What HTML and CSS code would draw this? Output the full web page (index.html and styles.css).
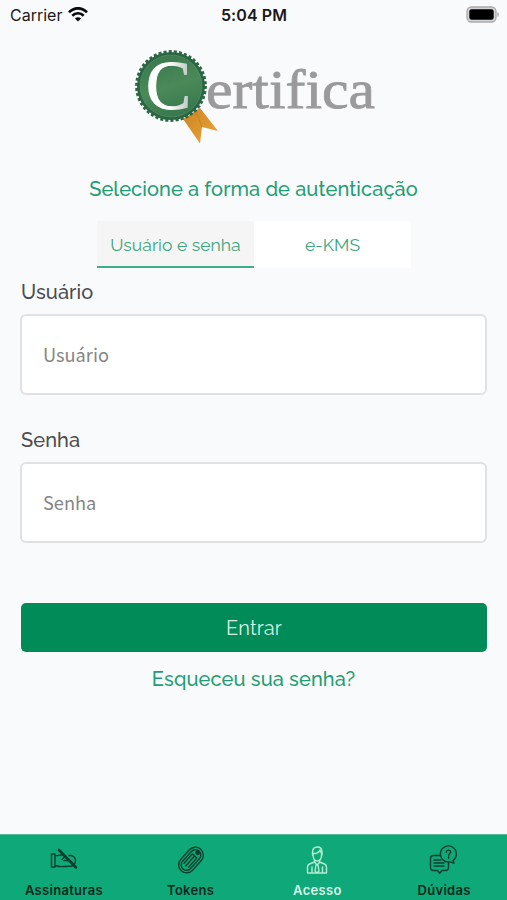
FILE: index.html
```html
<!DOCTYPE html>
<html lang="pt-BR">
<head>
<meta charset="utf-8">
<meta name="viewport" content="width=device-width, initial-scale=1">
<title>Certifica</title>
<link rel="stylesheet" href="styles.css">
</head>
<body>
<div class="screen">
  <header class="status">
    <div class="carrier">
      <span>Carrier</span>
      <svg width="20" height="15" viewBox="0 0 20 15" fill="none" stroke="#0c0c0d" stroke-width="2.7">
        <path d="M1 5.4C6-.1 14-.1 19 5.4"/>
        <path d="M4.3 8.8c3.2-3.4 8.2-3.4 11.4 0"/>
        <path d="M10 14.6 6.9 11.5c1.7-1.7 4.5-1.7 6.2 0z" fill="#0c0c0d" stroke="none"/>
      </svg>
    </div>
    <span class="clock">5:04 PM</span>
    <svg class="battery" width="34" height="17" viewBox="0 0 34 17">
      <rect x="1" y="1" width="29" height="15" rx="4.5" fill="#d4d5d6" stroke="#a9aaac" stroke-width="1.3"/>
      <rect x="3.3" y="3.2" width="24.4" height="10.6" rx="2.4" fill="#000"/>
      <path d="M31.4 6c2 .7 2 4.300 0 5z" fill="#a9aaac"/>
    </svg>
  </header>

  <main class="content">
    <svg class="logo" width="246" height="100" viewBox="0 0 246 100" role="img" aria-label="Certifica">
      <defs>
        <linearGradient id="seal" x1="0" y1="0" x2="0.3" y2="1">
          <stop offset="0" stop-color="#35764b"/>
          <stop offset="0.6" stop-color="#4b8958"/>
          <stop offset="1" stop-color="#397a4e"/>
        </linearGradient>
        <linearGradient id="ribbon" x1="0" y1="0" x2="1" y2="1">
          <stop offset="0" stop-color="#c98422"/>
          <stop offset="1" stop-color="#efa63b"/>
        </linearGradient>
        <linearGradient id="letter" x1="0" y1="0" x2="1" y2="0">
          <stop offset="0.5" stop-color="#fff"/>
          <stop offset="1" stop-color="#b9c3bd"/>
        </linearGradient>
      </defs>
      <path d="M53 75 70 64 88 87 72 83 70 99.500z" fill="url(#ribbon)"/>
      <path d="M66 68 72 83" stroke="#c07c20" stroke-width=".7"/>
      <circle cx="41" cy="42" r="34" fill="#2b6744"/>
      <circle class="teeth" cx="41" cy="42" r="34.200"/>
      <circle cx="41" cy="42" r="31.600" fill="url(#seal)" stroke="#28603f" stroke-width="1"/>
      <circle cx="41" cy="42" r="31" fill="none" stroke="#679873" stroke-width=".5"/>
      <text class="logo-c" x="16" y="65.300" textLength="45" lengthAdjust="spacingAndGlyphs" fill="url(#letter)" stroke="url(#letter)">C</text>
      <text class="logo-name" x="76" y="63.500" textLength="169" lengthAdjust="spacingAndGlyphs">ertifica</text>
    </svg>

    <h1 class="title">Selecione a forma de autenticação</h1>

    <nav class="tabs">
      <a class="tab active">Usuário e senha</a>
      <a class="tab">e-KMS</a>
    </nav>

    <form class="form">
      <label class="label" for="user">Usuário</label>
      <input class="field" id="user" type="text" placeholder="Usuário">
      <label class="label" for="pass">Senha</label>
      <input class="field" id="pass" type="password" placeholder="Senha">
      <button class="submit" type="button">Entrar</button>
    </form>
    <a class="forgot">Esqueceu sua senha?</a>
  </main>

  <footer class="bar">
    <a class="item">
      <svg width="30" height="30" viewBox="0 0 30 30">
        <path d="M2.500 9h3.500v13H2.500zM6 10.500c3 .8 4-1 7-.5l3 1M6 20.500c3 1 5 1.500 9 1l7-.2c2 0 2.500-2 1-2.600M20 10.500c4-.5 6.500 2 6.500 5 0 2.200-1 4-3 4.500M13 14.500l3-3 7 6M15 15.500h4"/>
        <path d="m10 5 17 17.500" stroke-width="2.600"/>
      </svg>
      <span>Assinaturas</span>
    </a>
    <a class="item">
      <svg width="30" height="30" viewBox="0 0 30 30">
        <g transform="rotate(42 15 15)">
          <rect x="7" y="0.500" width="16" height="29" rx="8"/>
          <rect x="9.600" y="3" width="10.800" height="24" rx="5.400"/>
          <path d="M12 10v12M15 10v13M18 10v12M12 9.500h6"/>
          <circle cx="15" cy="5" r="1.800" fill="#073f2d"/>
        </g>
      </svg>
      <span>Tokens</span>
    </a>
    <a class="item selected">
      <svg width="30" height="30" viewBox="0 0 30 30">
        <path d="M10.500 10V7.500C10.500 3.500 12.500 2 15.500 2s4.500 2 4.500 5v3M11 8.500c4 .3 6-1 7-3.500l1.500 3.500M11 9c0 5 2 7 4.300 7s4.300-2 4.300-7"/>
        <path d="M12.500 15v2l-5 2c-1.500.7-2 1.500-2 3v6h19v-6c0-1.500-.5-2.300-2-3l-5-2v-2M12.500 17l2.700 3 2.700-3M10 22v6M20.500 22v6M14 20l-1 6 2 2 2-2-1-6"/>
      </svg>
      <span>Acesso</span>
    </a>
    <a class="item">
      <svg width="30" height="30" viewBox="0 0 30 30">
        <path d="M11 10.500H4.500a3 3 0 0 0-3 3v9a3 3 0 0 0 3 3h4l2.200 2.700L13 25.500h3.500a3 3 0 0 0 3-3V18M5 15h7M5 18h10M5 21h10"/>
        <path d="M24 15.500a8 8 0 1 0-3 1.300l4 1.400z"/>
        <path d="M17.400 7.200c0-3 4.400-2.600 4.200 0-.2 1.500-2 1.500-2 3.500M19.600 12v1.500" stroke-width="1.400"/>
      </svg>
      <span>Dúvidas</span>
    </a>
  </footer>
</div>
</body>
</html>
```
FILE: styles.css
```css
* {
  box-sizing: border-box;
}

body {
  margin: 0;
  background: #f9fafc;
  font-family: Raleway, Lato, sans-serif;
}

.screen {
  display: flex;
  flex-direction: column;
  height: 900px;
}

.status {
  display: grid;
  grid-template-columns: 1fr auto 1fr;
  align-items: center;
  height: 30px;
  padding: 0 7px 1px 10px;
  font-family: Inter, sans-serif;
  font-size: 16px;
  color: #19191b;
}

.carrier {
  display: flex;
  align-items: center;
  gap: 6px;
}

.clock {
  margin-right: 2px;
  font-weight: 600;
  letter-spacing: 0.1px;
}

.battery {
  justify-self: end;
}

.content {
  flex: 1;
  display: flex;
  flex-direction: column;
  align-items: center;
  padding: 14px 20px 0;
}

.logo {
  display: block;
  margin-right: 2px;
}

.teeth {
  fill: none;
  stroke: #2b6744;
  stroke-width: 3.4;
  stroke-dasharray: 3 2.116;
}

.logo-c,
.logo-name {
  font-family: "Liberation Serif", serif;
}

.logo-c {
  font-size: 70px;
  stroke-width: 1;
}

.logo-name {
  font-size: 55px;
  fill: #9a9a9c;
  stroke: #9a9a9c;
  stroke-width: 0.8;
}

.title {
  margin: 31px 0 0;
  font-size: 20px;
  font-weight: 500;
  line-height: 28px;
  letter-spacing: 0.1px;
  color: #1f9e74;
  white-space: nowrap;
}

.tabs {
  display: flex;
  width: 314px;
  height: 47px;
  margin: 18px 0 0 1px;
}

.tab {
  flex: 1;
  display: flex;
  align-items: center;
  justify-content: center;
  padding-top: 1px;
  background: #fff;
  font-size: 17.5px;
  letter-spacing: 0.05px;
  color: #3ba580;
  white-space: nowrap;
}

.tab.active {
  padding-top: 3px;
  background: #f5f5f5;
  border-bottom: 2px solid #3fae88;
}

.form {
  display: flex;
  flex-direction: column;
  width: 467px;
  margin-top: 11px;
}

.label {
  height: 26px;
  margin-left: 1px;
  font-size: 20px;
  font-weight: 500;
  line-height: 26px;
  letter-spacing: 0.1px;
  color: #4b4c4f;
}

.field {
  width: 467px;
  height: 81px;
  margin: 9px 0 32px;
  padding: 0 21px 1px;
  border: 2px solid #dfe1e3;
  border-radius: 6px;
  background: #fff;
  font-family: "Noto Sans CJK SC", sans-serif;
  font-size: 18.2px;
}

.field::placeholder {
  color: #858585;
  opacity: 1;
}

.submit {
  width: 466px;
  height: 49px;
  margin: 28px 0 0 1px;
  padding: 0;
  border: 0;
  border-radius: 5px;
  background: #008b58;
  font: 20px Raleway, Lato, sans-serif;
  letter-spacing: 0.1px;
  color: #d8efe5;
}

.forgot {
  margin-top: 13px;
  font-size: 20px;
  font-weight: 500;
  line-height: 28px;
  letter-spacing: 0.1px;
  color: #1f9e74;
}

.bar {
  display: grid;
  grid-template-columns: repeat(4, 1fr);
  height: 66px;
  border-top: 1px solid #55b897;
  background: #0fa878;
}

.item {
  display: flex;
  flex-direction: column;
  align-items: center;
  padding: 10px 0 0 1px;
  font-family: Inter, sans-serif;
  font-size: 13px;
  font-weight: 600;
  line-height: 16px;
  letter-spacing: 0.3px;
  color: #06281d;
}

.item svg {
  margin-bottom: 7px;
  fill: none;
  stroke: #073f2d;
  stroke-width: 1.4;
  stroke-linecap: round;
  stroke-linejoin: round;
}

.item.selected {
  color: #d6f6ea;
}

.item.selected svg {
  stroke: #b5ead6;
}
```
